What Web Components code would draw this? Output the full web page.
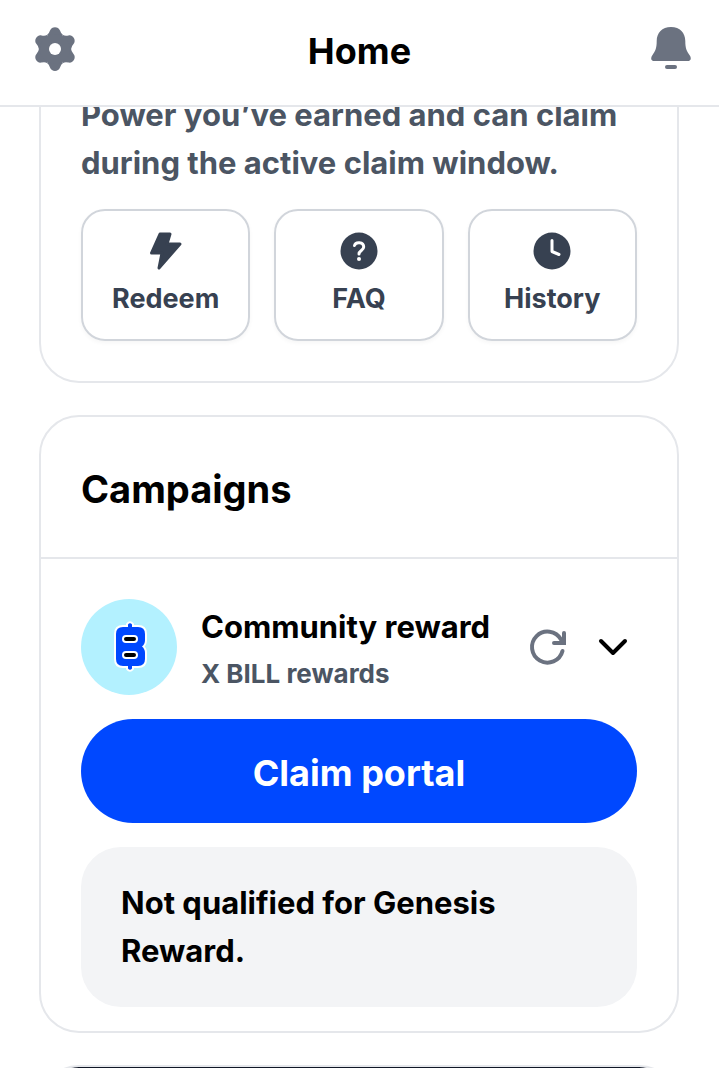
<!DOCTYPE html>
<html lang="en">
<head>
<meta charset="utf-8">
<meta name="viewport" content="width=device-width, initial-scale=1">
<title>Home</title>
<style>
  body {
    margin: 0;
    background: #fff;
    color: #000;
    font-family: Inter, "Liberation Sans", sans-serif;
    font-weight: 700;
  }
</style>
</head>
<body>
<wallet-app>
  <top-bar slot="header">Home</top-bar>
  <info-card>
    <claim-summary>
      Power you’ve earned and can claim during the active claim window.
      <quick-action slot="actions" icon="bolt">Redeem</quick-action>
      <quick-action slot="actions" icon="question">FAQ</quick-action>
      <quick-action slot="actions" icon="clock">History</quick-action>
    </claim-summary>
  </info-card>
  <info-card heading="Campaigns">
    <campaign-row>
      Community reward
      <span slot="detail">X BILL rewards</span>
    </campaign-row>
    <primary-button>Claim portal</primary-button>
    <notice-box>Not qualified for Genesis Reward.</notice-box>
  </info-card>
  <promo-card></promo-card>
</wallet-app>

<script>
const lobe = "M-8 -14Q-6 -15.2 -5 -18.5C-3.5 -23 3.5 -23 5 -18.5Q6 -15.2 8 -14L0 0Z";

const icons = {
  gear: `<g transform="translate(24 24)" fill="currentColor">
      ${[0, 60, 120, 180, 240, 300].map((a) => `<path d="${lobe}" transform="rotate(${a})"/>`).join("")}
      <circle r="15"/>
      <circle r="6" fill="#fff"/>
    </g>`,
  bell: `<path fill="currentColor" d="M24 2C15 2 9.700 8 9.700 16C9.700 23 8.500 26 5.200 30.500C3.300 33.500 4.300 36 7 36H41C43.700 36 44.700 33.500 42.800 30.500C39.500 26 38.300 23 38.300 16C38.300 8 33 2 24 2Z"/>
    <rect x="18" y="40" width="12" height="4" rx="2" fill="currentColor"/>`,
  bolt: `<path fill="currentColor" stroke="currentColor" stroke-width="3" stroke-linejoin="round" d="M18 7H28L25 17H38L17 41L20 26H9.500Z"/>`,
  question: `<circle cx="24" cy="24" r="18.500" fill="currentColor"/>
    <path fill="none" stroke="#fff" stroke-width="3" stroke-linecap="round" d="M19.500 18.500C20.500 14.500 28.700 14.500 28.700 20C28.700 23.500 24 23.500 24 27"/>
    <circle cx="24" cy="32" r="2" fill="#fff"/>`,
  clock: `<circle cx="24" cy="24" r="18.500" fill="currentColor"/>
    <path fill="none" stroke="#fff" stroke-width="3" stroke-linecap="round" stroke-linejoin="round" d="M24 13.500V24.500L31 27.500"/>`,
  refresh: `<path fill="none" stroke="currentColor" stroke-width="4" stroke-linecap="round" d="M37.500 28A15.500 15.500 0 1 1 36 16.500L39 20"/>
    <path fill="none" stroke="currentColor" stroke-width="4" stroke-linecap="round" d="M29 20H39V10"/>`,
  chevron: `<path fill="none" stroke="currentColor" stroke-width="4" stroke-linecap="round" stroke-linejoin="round" d="M12 18L24 30L36 18"/>`,
};

function icon(name) {
  return `<svg width="48" height="48" viewBox="0 0 48 48" aria-hidden="true">${icons[name]}</svg>`;
}

class BaseElement extends HTMLElement {
  constructor() {
    super();
    this.attachShadow({ mode: "open" });
  }

  connectedCallback() {
    const template = document.createElement("template");
    template.innerHTML = `<style>
        * { box-sizing: border-box; }
        :host { display: block; box-sizing: border-box; }
        svg { display: block; flex: none; }
        button { font: inherit; color: inherit; background: none; border: 0; margin: 0; padding: 0; cursor: pointer; }
        h1, h2, h3, p { margin: 0; font-weight: inherit; }
      </style>${this.getTemplate()}`;
    this.shadowRoot.appendChild(template.content.cloneNode(true));
  }
}

class WalletApp extends BaseElement {
  getTemplate() {
    return `<style>
        :host { display: flex; flex-direction: column; height: 100vh; }
        main { flex: 1; min-height: 0; overflow: auto; scrollbar-width: none; }
        .feed {
          display: flex;
          flex-direction: column;
          gap: 32px;
          margin-top: -58px;
          padding: 0 40px 40px 39px;
        }
      </style>
      <slot name="header"></slot>
      <main><div class="feed"><slot></slot></div></main>`;
  }
}

class TopBar extends BaseElement {
  getTemplate() {
    return `<style>
        :host { border-bottom: 2px solid #e5e7eb; }
        header {
          display: grid;
          grid-template-columns: 55px 1fr 55px;
          align-items: start;
          padding: 25px 24px 30px;
        }
        button { display: flex; justify-content: flex-end; color: #6b7280; }
        h1 { padding-top: 2px; font-size: 36px; line-height: 48px; text-align: center; }
      </style>
      <header>
        <button aria-label="Settings">${icon("gear")}</button>
        <h1><slot></slot></h1>
        <button aria-label="Notifications">${icon("bell")}</button>
      </header>`;
  }
}

class InfoCard extends BaseElement {
  getTemplate() {
    const heading = this.getAttribute("heading");
    return `<style>
        :host { border: 2px solid #e5e7eb; border-radius: 40px; }
        h2 {
          padding: 48px 40px 44px;
          border-bottom: 2px solid #e5e7eb;
          font-size: 38px;
          line-height: 48px;
        }
        .body {
          display: flex;
          flex-direction: column;
          gap: 24px;
          padding: 40px 40px ${heading ? 24 : 40}px;
        }
      </style>
      ${heading ? `<h2>${heading}</h2>` : ""}
      <div class="body"><slot></slot></div>`;
  }
}

class ClaimSummary extends BaseElement {
  getTemplate() {
    return `<style>
        p { color: #4b5563; font-size: 31px; line-height: 48px; }
        .actions {
          display: grid;
          grid-template-columns: repeat(3, 1fr);
          gap: 24px;
          margin-top: 22px;
        }
      </style>
      <p><slot></slot></p>
      <div class="actions"><slot name="actions"></slot></div>`;
  }
}

class QuickAction extends BaseElement {
  getTemplate() {
    return `<style>
        button {
          display: flex;
          flex-direction: column;
          align-items: center;
          width: 100%;
          padding: 16px 0;
          border: 2px solid #d1d5db;
          border-radius: 24px;
          box-shadow: 0 2px 4px rgba(0, 0, 0, 0.04);
          color: #374151;
          font-size: 27px;
          line-height: 48px;
        }
      </style>
      <button>${icon(this.getAttribute("icon"))}<span><slot></slot></span></button>`;
  }
}

class CampaignRow extends BaseElement {
  getTemplate() {
    return `<style>
        :host { display: flex; align-items: center; gap: 24px; }
        .text { flex: 1; min-width: 0; white-space: nowrap; }
        h3 { font-size: 31px; line-height: 54px; }
        p { color: #4b5563; font-size: 26px; line-height: 40px; }
        .tools { display: flex; gap: 16px; }
        .refresh { color: #6b7280; }
      </style>
      <svg width="96" height="96" viewBox="0 0 96 96" aria-hidden="true">
        <circle cx="48" cy="48" r="48" fill="#b3f1ff"/>
        <g stroke="#fff" stroke-width="4" stroke-linejoin="round">
          <path d="M47 25.500Q49 23 51 25.500V29H47ZM47 67H51V69.500Q49 72 47 69.500Z"/>
          <path d="M42 28H57Q64 28 64 35V41Q64 45 61 47.500Q64 50 64 54V60Q64 67 57 67H42Q35 67 35 60V35Q35 28 42 28Z"/>
        </g>
        <g fill="#0048ff">
          <path d="M47 25.500Q49 23 51 25.500V30H47ZM47 66H51V69.500Q49 72 47 69.500Z"/>
          <path d="M42 28H57Q64 28 64 35V41Q64 45 61 47.500Q64 50 64 54V60Q64 67 57 67H42Q35 67 35 60V35Q35 28 42 28Z"/>
        </g>
        <g stroke="#fff" stroke-width="2">
          <rect x="42" y="37" width="14" height="6" rx="3"/>
          <rect x="42" y="53" width="14" height="6" rx="3"/>
        </g>
      </svg>
      <div class="text">
        <h3><slot></slot></h3>
        <p><slot name="detail"></slot></p>
      </div>
      <div class="tools">
        <button class="refresh" aria-label="Refresh">${icon("refresh")}</button>
        <button aria-label="Show details">${icon("chevron")}</button>
      </div>`;
  }
}

class PrimaryButton extends BaseElement {
  getTemplate() {
    return `<style>
        button {
          width: 100%;
          padding: 30px 40px 26px;
          border-radius: 52px;
          background: #0048ff;
          color: #fff;
          font-size: 36px;
          line-height: 48px;
        }
      </style>
      <button><slot></slot></button>`;
  }
}

class NoticeBox extends BaseElement {
  getTemplate() {
    return `<style>
        p {
          padding: 32px 40px;
          border-radius: 40px;
          background: #f3f4f6;
          font-size: 31px;
          line-height: 48px;
        }
      </style>
      <p><slot></slot></p>`;
  }
}

class PromoCard extends BaseElement {
  getTemplate() {
    return `<style>
        :host {
          height: 240px;
          border: 2px solid #e5e7eb;
          border-radius: 40px;
          background: #111827;
          background-clip: padding-box;
        }
      </style>`;
  }
}

customElements.define("wallet-app", WalletApp);
customElements.define("top-bar", TopBar);
customElements.define("info-card", InfoCard);
customElements.define("claim-summary", ClaimSummary);
customElements.define("quick-action", QuickAction);
customElements.define("campaign-row", CampaignRow);
customElements.define("primary-button", PrimaryButton);
customElements.define("notice-box", NoticeBox);
customElements.define("promo-card", PromoCard);
</script>
</body>
</html>
